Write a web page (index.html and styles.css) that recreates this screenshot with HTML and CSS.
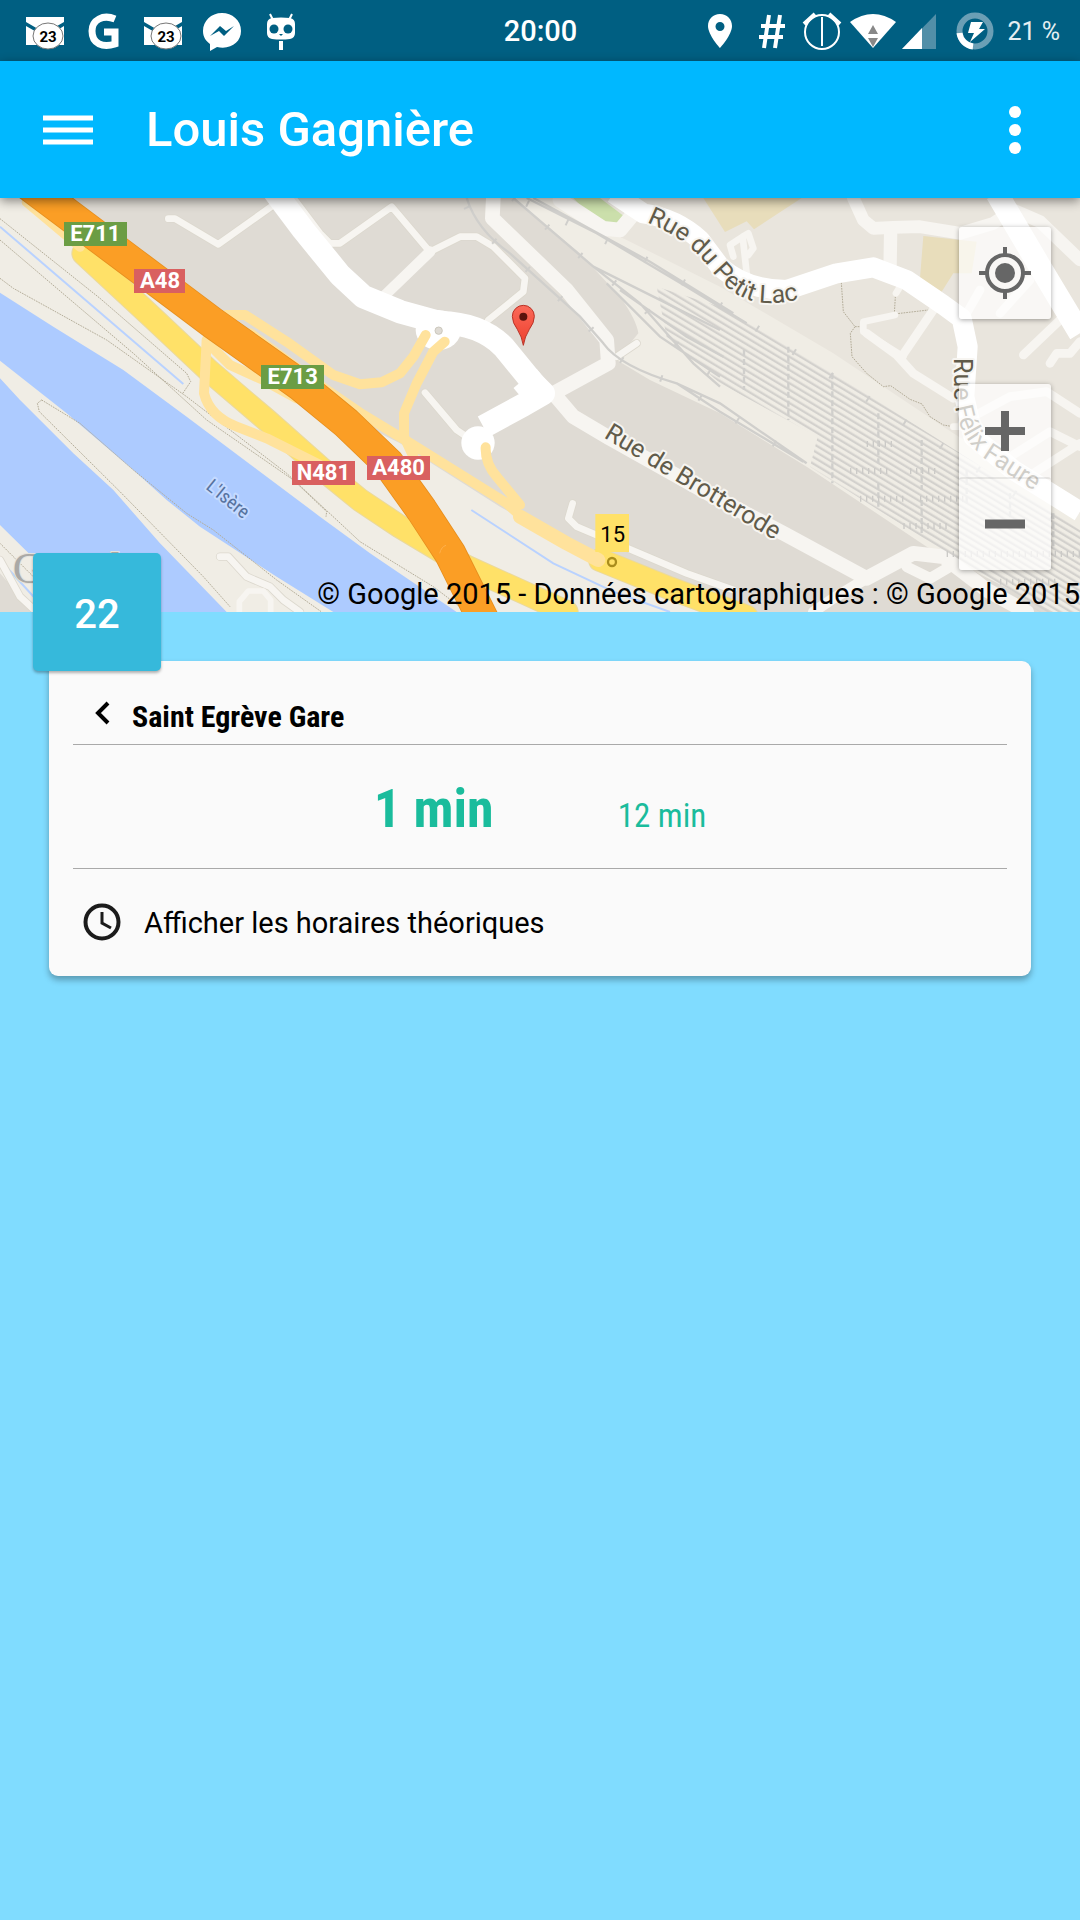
FILE: index.html
```html
<!DOCTYPE html>
<html lang="fr">
<head>
<meta charset="utf-8">
<meta name="viewport" content="width=device-width, initial-scale=1">
<title>Louis Gagnière</title>
<link rel="stylesheet" href="styles.css">
</head>
<body>
<header class="status-bar">
  <div class="status-group">
    <svg class="status-icon" viewBox="0 0 48 48"><path fill="#fff" d="M5 10h38v5L24 26 5 15zM5 19l14 8-2 11H5zM43 19v19H30V27z"/><ellipse cx="27" cy="29" rx="15" ry="13" fill="#fff" stroke="#777" stroke-width="1"/><text class="mail-count" x="27" y="35">23</text></svg>
    <svg class="status-icon" viewBox="0 0 48 48"><path fill="none" stroke="#fff" stroke-width="7" d="M35 12C23 7 12 13 12 24c0 13 11 17 23 13V25H24"/></svg>
    <svg class="status-icon" viewBox="0 0 48 48"><path fill="#fff" d="M5 10h38v5L24 26 5 15zM5 19l14 8-2 11H5zM43 19v19H30V27z"/><ellipse cx="27" cy="29" rx="15" ry="13" fill="#fff" stroke="#777" stroke-width="1"/><text class="mail-count" x="27" y="35">23</text></svg>
    <svg class="status-icon" viewBox="0 0 48 48"><path fill="#fff" d="M24 6C13 6 5 14 5 24c0 6 3 10 7 13v7l7-4c14 3 24-5 24-16S34 6 24 6z"/><path fill="#005f82" d="M12 29l10-10 6 5 8-5-10 10-5-5z"/></svg>
    <svg class="status-icon" viewBox="0 0 48 48"><path stroke="#fff" stroke-width="2" d="M13 7l3 6M35 7l-3 6"/><path fill="#fff" d="M10 17q0-5 5-6 9-1 18 0 5 1 5 6v9q0 5-5 6-9 1-18 0-5-1-5-6zM22 34h4v9h-4z"/><g fill="#005f82"><circle cx="17" cy="22" r="4.500"/><circle cx="31" cy="22" r="4.500"/><path d="M22 27h4l-2 2z"/></g></svg>
  </div>
  <time class="clock">20:00</time>
  <div class="status-group status-right">
    <svg class="status-icon" viewBox="0 0 48 48"><path fill="#fff" fill-rule="evenodd" d="M24 7c-7 0-12 5-12 12 0 9 12 22 12 22s12-13 12-22c0-7-5-12-12-12zm0 8a4 4 0 1 1 0 9 4 4 0 0 1 0-9z"/></svg>
    <svg class="status-icon" viewBox="0 0 48 48"><path fill="none" stroke="#fff" stroke-width="4" d="M22 8l-5 33M33 8l-5 33M14 19h24M12 30h24"/></svg>
    <svg class="status-icon" viewBox="0 0 48 48"><g fill="none" stroke="#fff"><circle cx="24" cy="25" r="17" stroke-width="2"/><path stroke-width="2" d="M24 10v29"/><path stroke-width="4" d="M6 17L17 7M42 17L31 7"/></g></svg>
    <svg class="status-icon" viewBox="0 0 48 48"><path fill="#fff" d="M1 15q23-16 46 0L24 41z"/><path fill="#888" d="M24 18l5 9H19zM19 31h10l-5 9z"/></svg>
    <svg class="status-icon" viewBox="0 0 48 48"><path fill="#528fa8" d="M36 7v35H2z"/><path fill="#fff" d="M22 21v21H2z"/></svg>
    <svg class="status-icon" viewBox="0 0 48 48"><g fill="none" stroke-width="6"><circle cx="24" cy="24" r="15.500" stroke="#6b9fb5"/><path stroke="#fff" d="M8.500 26A15.500 15.500 0 0 0 22 39.500"/></g><path fill="#fff" d="M20 15h12l-4 7h6L19 35l4-9h-6z"/></svg>
    <span class="battery-level">21 %</span>
  </div>
</header>

<div class="app-bar">
  <button class="icon-button" aria-label="Menu"><svg width="50" height="30" viewBox="0 0 50 30"><path stroke="#fff" stroke-width="5" d="M0 3h50M0 15h50M0 27h50"/></svg></button>
  <h1 class="app-title">Louis Gagnière</h1>
  <button class="icon-button" aria-label="Plus d'options"><svg width="12" height="48" viewBox="0 0 12 48"><g fill="#fff"><circle cx="6" cy="6" r="6"/><circle cx="6" cy="24" r="6"/><circle cx="6" cy="42" r="6"/></g></svg></button>
</div>

<main>
  <section class="map" aria-label="Carte">
    <svg class="map-canvas" viewBox="0 24 3240 1242" preserveAspectRatio="xMidYMid slice">
      <defs>
        <pattern id="tracks" width="40" height="17" patternUnits="userSpaceOnUse" patternTransform="rotate(31)"><path stroke="#d3d1cd" stroke-width="7" d="M0 8h40"/></pattern>
        <linearGradient id="pin" x1="0" y1="0" x2="0" y2="1"><stop offset="0" stop-color="#fa6a5a"/><stop offset="1" stop-color="#ee3f2c"/></linearGradient>
        <path id="street-lac" d="M1940 97Q2050 140 2118 220Q2200 335 2290 338Q2370 345 2480 300"/>
        <path id="street-faure" d="M2862 504L2862 620Q2870 740 2960 810L3160 940"/>
      </defs>
      <rect y="24" width="3240" height="1242" fill="#dfdbd4"/>
      <!-- ground tones -->
      <path fill="#f0ede5" d="M0 24h120L1080 700 1200 760 1500 950 1800 1120 2240 1266H0z"/>
      <path fill="#e9e5dd" d="M1660 24H3240V1020L2870 790 2160 320 1860 140z"/>
      <path fill="#f0ede5" d="M1540 24H1700L1820 120 2160 290 2500 490 2860 730 3240 970V1266H3160L2780 1070 2420 830 2160 670 1950 570 1850 510 1915 430Q1910 390 1860 320L1740 190z"/>
      <path fill="#cbdfab" d="M1720 24H1800L1880 85 1848 130 1820 130z"/>
      <path fill="#e8ddbb" d="M2110 24H2405L2262 118 2240 94 2175 126zM2770 138L2930 155 2915 250 2860 250 2825 305 2760 265z"/>
      <!-- river -->
      <g fill="#adcbff">
        <path d="M0 308L160 410 370 540 560 680 760 830 960 980 1110 1090 1370 1266H1000L830 1160 600 1010 500 930 400 840 200 670 0 512z"/>
        <path d="M0 565L60 630 220 790 340 900 480 1060 680 1266H265L0 1005z"/>
      </g>
      <g fill="none" stroke="#b9d2ff" stroke-width="6"><path d="M0 110L550 582M1414 960L1660 1120 1840 1205 2010 1266M0 1110L110 1230"/></g>
      <path fill="#dfdbd4" d="M0 1150L100 1266H0z"/>
      <!-- footpaths -->
      <g fill="none" stroke="#b3ac98" stroke-width="3" stroke-dasharray="5 3">
        <path d="M0 86L300 325 560 550 572 575 547 612M0 150L400 490 620 690 880 870 980 965 978 980M0 265L40 295 320 450 560 620 860 850 1080 1055 1300 1190 1400 1266"/>
        <path d="M125 630L112 640 118 665 360 905 610 1160 690 1250M125 630L240 700 400 840 560 970 640 1020 830 1170 965 1266M0 1060L110 1170"/>
        <path d="M2524 278L2530 365 2565 410 2551 430 2556 500 2600 550 2650 590 2672 587 2730 628 2766 642 2790 680 2830 705 2860 710M2565 410H2580M2686 320L2683 372 2785 360"/>
      </g>
      <!-- minor roads -->
      <g fill="none" stroke-linecap="round" stroke-linejoin="round">
        <g stroke="#dcd8ce">
          <path stroke-width="25" d="M505 86H525L655 163 850 24M880 24L960 130 990 160H1020L1175 50 1285 180M1465 390L1570 305 1575 265 1480 170 1430 140H1380L1290 185M1275 608L1370 720 1400 740M1718 940L1705 985 1730 1010 1860 1065 2060 1150 2200 1200M1850 500L1910 460M0 1110L60 1220 110 1266M660 1100H685L740 1160 810 1190 850 1230 900 1266"/>
        </g>
        <g stroke="#f7f5f1">
          <path stroke-width="20" d="M505 86H525L655 163 850 24M880 24L960 130 990 160H1020L1175 50 1285 180M1465 390L1570 305 1575 265 1480 170 1430 140H1380L1290 185M1275 608L1370 720 1400 740M1718 940L1705 985 1730 1010 1860 1065 2060 1150 2200 1200M1850 500L1910 460M0 1110L60 1220 110 1266M660 1100H685L740 1160 810 1190 850 1230 900 1266"/>
          <path stroke-width="17" d="M718 1266V1235L745 1203H790L812 1230V1266"/>
          <path stroke-width="32" d="M1290 185L1140 330"/>
          <path stroke-width="44" d="M1480 24L1477 85 1700 300 1820 450 1825 520 1660 610 1720 680 1830 745 2160 930 2350 1030 2600 1165 2740 1090 2830 1100 2960 1200 3080 1266"/>
          <path stroke-width="32" d="M2600 1165L2500 1225 2440 1266M2720 1130L2790 1165 2850 1130"/>
          <path stroke-width="44" d="M1680 30L1810 115 1860 120 1910 60"/>
          <path stroke-width="38" d="M2560 24L2590 90 2620 115 2680 112 2760 110 2880 130 2980 100 3040 60 3120 95 3240 210"/>
          <path stroke-width="40" d="M2672 120L2670 240"/>
          <path stroke-width="20" d="M2700 290L2688 310M2685 375L2590 395 2590 425 2710 500M2240 250L2228 140 2190 165 2200 200M2228 140L2245 130 2260 175 2245 195M2860 710H2880"/>
          <path stroke-width="26" d="M2800 360L2705 500M2600 430L2690 495 2740 550 2860 625M3070 495L3180 390M3150 520L3170 490 3210 490 3240 455M2940 300L2900 370M3090 270L3000 370M2900 690L3030 620 3140 605 3240 670M3000 820L3150 725 3240 770M3100 850L3240 760"/>
        </g>
      </g>
      <!-- railway -->
      <g fill="none" stroke="#d0cfcc">
        <path fill="url(#tracks)" stroke="none" d="M1970 290L2160 350 2500 550 2850 770 3240 1020V1266H3120L2430 830 2453 740 2160 580 2000 440z"/>
        <path stroke-width="7" d="M1400 24Q1430 120 1530 190L1740 380 1810 460Q1860 530 2030 580L2160 640 2420 820M1540 24L1780 230 1920 340 2080 520 2160 590M1580 24L1790 130 2060 290 2240 400M1600 24L1950 215 2200 370M1780 230L1960 320 2160 420M1860 300L2060 440 2170 500M1820 280L1980 440 2160 560M2030 580L2160 665 2410 815"/>
        <path stroke-width="20" stroke-dasharray="6 125" d="M1580 40L1950 215 2200 370 2860 790 3240 1040M1540 24L1780 230 1920 340 2080 520 2160 570M1400 50Q1430 120 1530 190L1740 380 1810 460Q1860 530 2030 580L2420 820"/>
        <path stroke-width="7" stroke-dasharray="18 9" d="M2232 480V600M2365 470V690M2497 550V880M2635 670V820M2635 880V950M2765 750V900M2765 930V1030M2900 840V940M3030 910V1020M3160 970V1070"/>
      </g>
      <g fill="none" stroke="#cbcac7" stroke-width="18" stroke-dasharray="4 14"><path d="M2600 762H2680M2550 843H2670M2730 843H2810M2580 926H2710M2760 926H2900M2710 1008H2850M2840 1092H3240M3000 1175H3180"/></g>
      <!-- main streets -->
      <g fill="none" stroke="#fff" stroke-linejoin="round">
        <path stroke-width="70" d="M820 0L910 120 1020 255 1090 320 1200 365 1320 398M1320 398Q1440 400 1510 470L1600 580 1630 610 1570 645 1450 710"/>
        <path stroke-width="90" d="M1575 565L1625 625"/>
        <path stroke-width="60" d="M1840 10L1930 70Q2030 85 2100 150L2160 230Q2240 300 2360 300L2510 250 2620 232 2720 270 2830 345 2885 385 2903 470 2893 620 2920 740 3040 840 3240 965"/>
        <path stroke-width="68" d="M2990 10L3120 230 3240 430"/>
      </g>
      <g fill="#fff"><ellipse cx="1315" cy="420" rx="68" ry="60"/><circle cx="1434" cy="759" r="50"/></g>
      <circle cx="1316" cy="422" r="11" fill="#dfdbd4" stroke="#ccc8bd" stroke-width="3"/>
      <!-- motorways and ramps -->
      <g fill="none" stroke-linecap="round" stroke-linejoin="round">
        <path stroke="#ead99e" stroke-width="72" d="M250 190L460 385 630 545 800 690 960 832 1080 930 1200 1010 1400 1130 1700 1266M1800 1110L2010 1195 2240 1280"/>
        <path stroke="#ffe168" stroke-width="66" d="M250 190L460 385 630 545 800 690 960 832 1080 930 1200 1010 1400 1130 1700 1266M1800 1110L2010 1195 2240 1280"/>
        <path stroke="#ffe29c" stroke-width="30" d="M80 36L240 170M680 375H735L860 455 1000 555 1080 583 1145 577 1200 550 1240 500 1277 435M1334 455L1300 485 1250 580 1212 670V740L1250 820M750 430L980 600 1080 668 1240 765 1520 940 1570 985M620 450L612 610Q630 680 710 710L800 745 900 795 960 825M635 470L690 525 790 570 890 625M1457 772Q1455 820 1490 860L1560 945"/>
        <path stroke="#ffe29c" stroke-width="42" d="M1560 980L1700 1060 1795 1110"/>
        <path stroke="#e68f1f" stroke-width="97" stroke-linecap="butt" d="M80 -20L400 220 640 400 900 585 1040 700 1165 820 1265 960 1350 1090 1460 1310"/>
        <path stroke="#fb9e25" stroke-width="92" stroke-linecap="butt" d="M80 -20L400 220 640 400 900 585 1040 700 1165 820 1265 960 1350 1090 1460 1310"/>
      </g>
      <path fill="none" stroke="#ffb04b" stroke-width="3" d="M1319 1090Q1324 1070 1338 1066"/>
      <!-- road shields -->
      <g class="shield">
        <path fill="#6b9d44" d="M192 96h189v72H192zM783 525h189v72H783z"/>
        <path fill="#d96060" d="M402 237h153v72H402zM876 813h189v72H876zM1101 798h189v72h-189z"/>
        <text x="286" y="154">E711</text><text x="480" y="294">A48</text><text x="878" y="582">E713</text><text x="970" y="870">N481</text><text x="1196" y="855">A480</text>
      </g>
      <path fill="#ffe168" d="M1786 972h101v114h-101z"/>
      <circle cx="1836" cy="1116" r="12" fill="#ffe168" stroke="#aa8d1c" stroke-width="7"/>
      <text class="exit-label" x="1838" y="1055">15</text>
      <!-- street names -->
      <g class="street-label">
        <text><textPath href="#street-lac">Rue du Petit Lac</textPath></text>
        <text transform="translate(1810 742) rotate(31)">Rue de Brotterode</text>
        <text><textPath href="#street-faure">Rue Félix Faure</textPath></text>
      </g>
      <text class="river-label" transform="translate(615 895) rotate(39)">L'Isère</text>
      <text class="map-brand" x="38" y="1180">Google</text>
      <!-- stop marker -->
      <path fill="url(#pin)" stroke="#b93226" stroke-width="3" d="M1570 466Q1566 440 1552 418Q1537 398 1537 379a33 33 0 0 1 66 0Q1603 398 1588 418Q1574 440 1570 466z"/><circle cx="1570" cy="380" r="12" fill="#5b120c"/>
    </svg>
    <button class="map-button locate-button" aria-label="Ma position"><svg width="52" height="52" viewBox="0 0 52 52"><g fill="none" stroke="#666" stroke-width="4"><circle cx="26" cy="26" r="18"/><path d="M26 0v8M26 44v8M0 26h8M44 26h8"/></g><circle cx="26" cy="26" r="10" fill="#666"/></svg></button>
    <div class="zoom-controls">
      <button class="map-button" aria-label="Zoom avant"><svg width="40" height="40" viewBox="0 0 40 40"><path stroke="#666" stroke-width="8" d="M0 20h40M20 0v40"/></svg></button>
      <button class="map-button" aria-label="Zoom arrière"><svg width="40" height="40" viewBox="0 0 40 40"><path stroke="#666" stroke-width="9" d="M0 19h40"/></svg></button>
    </div>
    <p class="attribution">© Google 2015 - Données cartographiques : © Google 2015</p>
  </section>

  <article class="line-card">
    <div class="line-badge">22</div>
    <button class="direction"><svg class="row-icon" viewBox="0 0 40 40"><path fill="none" stroke="#000" stroke-width="4" d="M26 8L16 18l10 10"/></svg><span>Saint Egrève Gare</span></button>
    <div class="departures"><strong class="next">1 min</strong><span class="following">12 min</span></div>
    <button class="timetable"><svg class="row-icon" viewBox="0 0 40 40"><g fill="none" stroke="#1b1b1b"><circle cx="20" cy="19" r="16.500" stroke-width="4"/><path stroke-width="3" d="M20 9v11l9 5"/></g></svg><span>Afficher les horaires théoriques</span></button>
  </article>
</main>
</body>
</html>
```
FILE: styles.css
```css
* {
  box-sizing: border-box;
}

body {
  margin: 0;
  min-height: 100vh;
  background: #80dcff;
  color: #000;
  font-family: Roboto, "Liberation Sans", sans-serif;
}

button {
  margin: 0;
  padding: 0;
  border: 0;
  background: none;
  color: inherit;
  font: inherit;
  text-align: left;
}

svg {
  display: block;
}

.status-bar {
  display: grid;
  grid-template-columns: 1fr auto 1fr;
  align-items: center;
  height: 61px;
  padding: 1px 20px 0 21px;
  background: #005f82;
  color: #fff;
}

.status-group {
  display: flex;
  align-items: center;
  gap: 11px;
}

.status-right {
  justify-content: flex-end;
  gap: 3px;
}

.status-icon {
  width: 48px;
  height: 48px;
}

.mail-count {
  fill: #000;
  font-size: 15px;
  font-weight: 700;
  text-anchor: middle;
}

.clock {
  font-size: 29px;
  font-weight: 500;
}

.battery-level {
  margin-left: 5px;
  color: #e5eff2;
  font-size: 25px;
}

.app-bar {
  position: relative;
  z-index: 2;
  display: flex;
  align-items: center;
  height: 137px;
  padding: 0 59px 0 43px;
  background: #00b8ff;
  box-shadow: 0 3px 10px rgba(0, 0, 0, 0.45);
  color: #fff;
}

.app-title {
  flex: 1;
  margin: 0 0 0 53px;
  font-size: 49px;
  font-weight: 500;
  line-height: 64px;
}

.map {
  position: relative;
  height: 414px;
  overflow: hidden;
}

.map-canvas {
  width: 100%;
  height: 100%;
}

.shield {
  fill: #fff;
  font-size: 66px;
  font-weight: 700;
  text-anchor: middle;
}

.exit-label {
  font-size: 66px;
  text-anchor: middle;
}

.street-label {
  fill: #615b4a;
  stroke: #f7f5f1;
  stroke-width: 12px;
  stroke-linejoin: round;
  paint-order: stroke;
  font-size: 75px;
}

.river-label {
  fill: #57739f;
  stroke: #c4daff;
  stroke-width: 12px;
  stroke-linejoin: round;
  paint-order: stroke;
  font-family: "Roboto Condensed", Roboto, sans-serif;
  font-size: 57px;
}

.map-brand {
  fill: #aaa9a6;
  stroke: #e5e3de;
  stroke-width: 6px;
  paint-order: stroke;
  font-family: "Liberation Serif", serif;
  font-size: 132px;
}

.map-button {
  display: grid;
  place-items: center;
  width: 92px;
  height: 92px;
  border-radius: 3px;
  background: rgba(255, 255, 255, 0.7);
  box-shadow: 0 1px 5px rgba(0, 0, 0, 0.35);
}

.locate-button {
  position: absolute;
  top: 29px;
  right: 29px;
}

.zoom-controls {
  position: absolute;
  top: 186px;
  right: 29px;
  border-radius: 3px;
  background: rgba(255, 255, 255, 0.7);
  box-shadow: 0 1px 5px rgba(0, 0, 0, 0.35);
}

.zoom-controls .map-button {
  height: 93px;
  background: none;
  box-shadow: none;
}

.zoom-controls .map-button + .map-button {
  border-top: 2px solid rgba(0, 0, 0, 0.08);
}

.attribution {
  position: absolute;
  right: 0;
  bottom: 0;
  margin: 0;
  font-size: 29px;
  line-height: 36px;
  white-space: nowrap;
}

.line-card {
  position: relative;
  margin: 49px 49px 0;
  padding: 28px 24px 16px;
  border-radius: 9px;
  background: #fafafa;
  box-shadow: 0 4px 6px rgba(0, 0, 0, 0.3);
}

.line-badge {
  position: absolute;
  top: -108px;
  left: -16px;
  z-index: 1;
  display: grid;
  place-items: center;
  width: 128px;
  height: 118px;
  padding-top: 4px;
  border-radius: 5px;
  background: #36b9db;
  box-shadow: 0 2px 3px rgba(0, 0, 0, 0.3);
  color: #fff;
  font-size: 40px;
  font-weight: 500;
}

.row-icon {
  width: 40px;
  height: 40px;
}

.direction,
.timetable {
  display: flex;
  align-items: center;
  width: 100%;
  padding-left: 9px;
}

.direction {
  gap: 10px;
  height: 55px;
  padding-bottom: 4px;
  font-family: "Roboto Condensed", Roboto, sans-serif;
  font-size: 30px;
  font-weight: 700;
}

.direction span {
  padding-top: 3px;
}

.departures {
  display: flex;
  align-items: baseline;
  justify-content: center;
  gap: 124px;
  padding: 32px 0 20px;
  border-top: 1px solid #a9a9a9;
  border-bottom: 1px solid #a9a9a9;
  color: #1abc9c;
  font-family: "Roboto Condensed", Roboto, sans-serif;
  line-height: 64px;
}

.next {
  font-size: 54px;
}

.following {
  font-size: 33px;
}

.timetable {
  gap: 22px;
  height: 91px;
  padding-top: 17px;
  font-size: 29px;
}
```
